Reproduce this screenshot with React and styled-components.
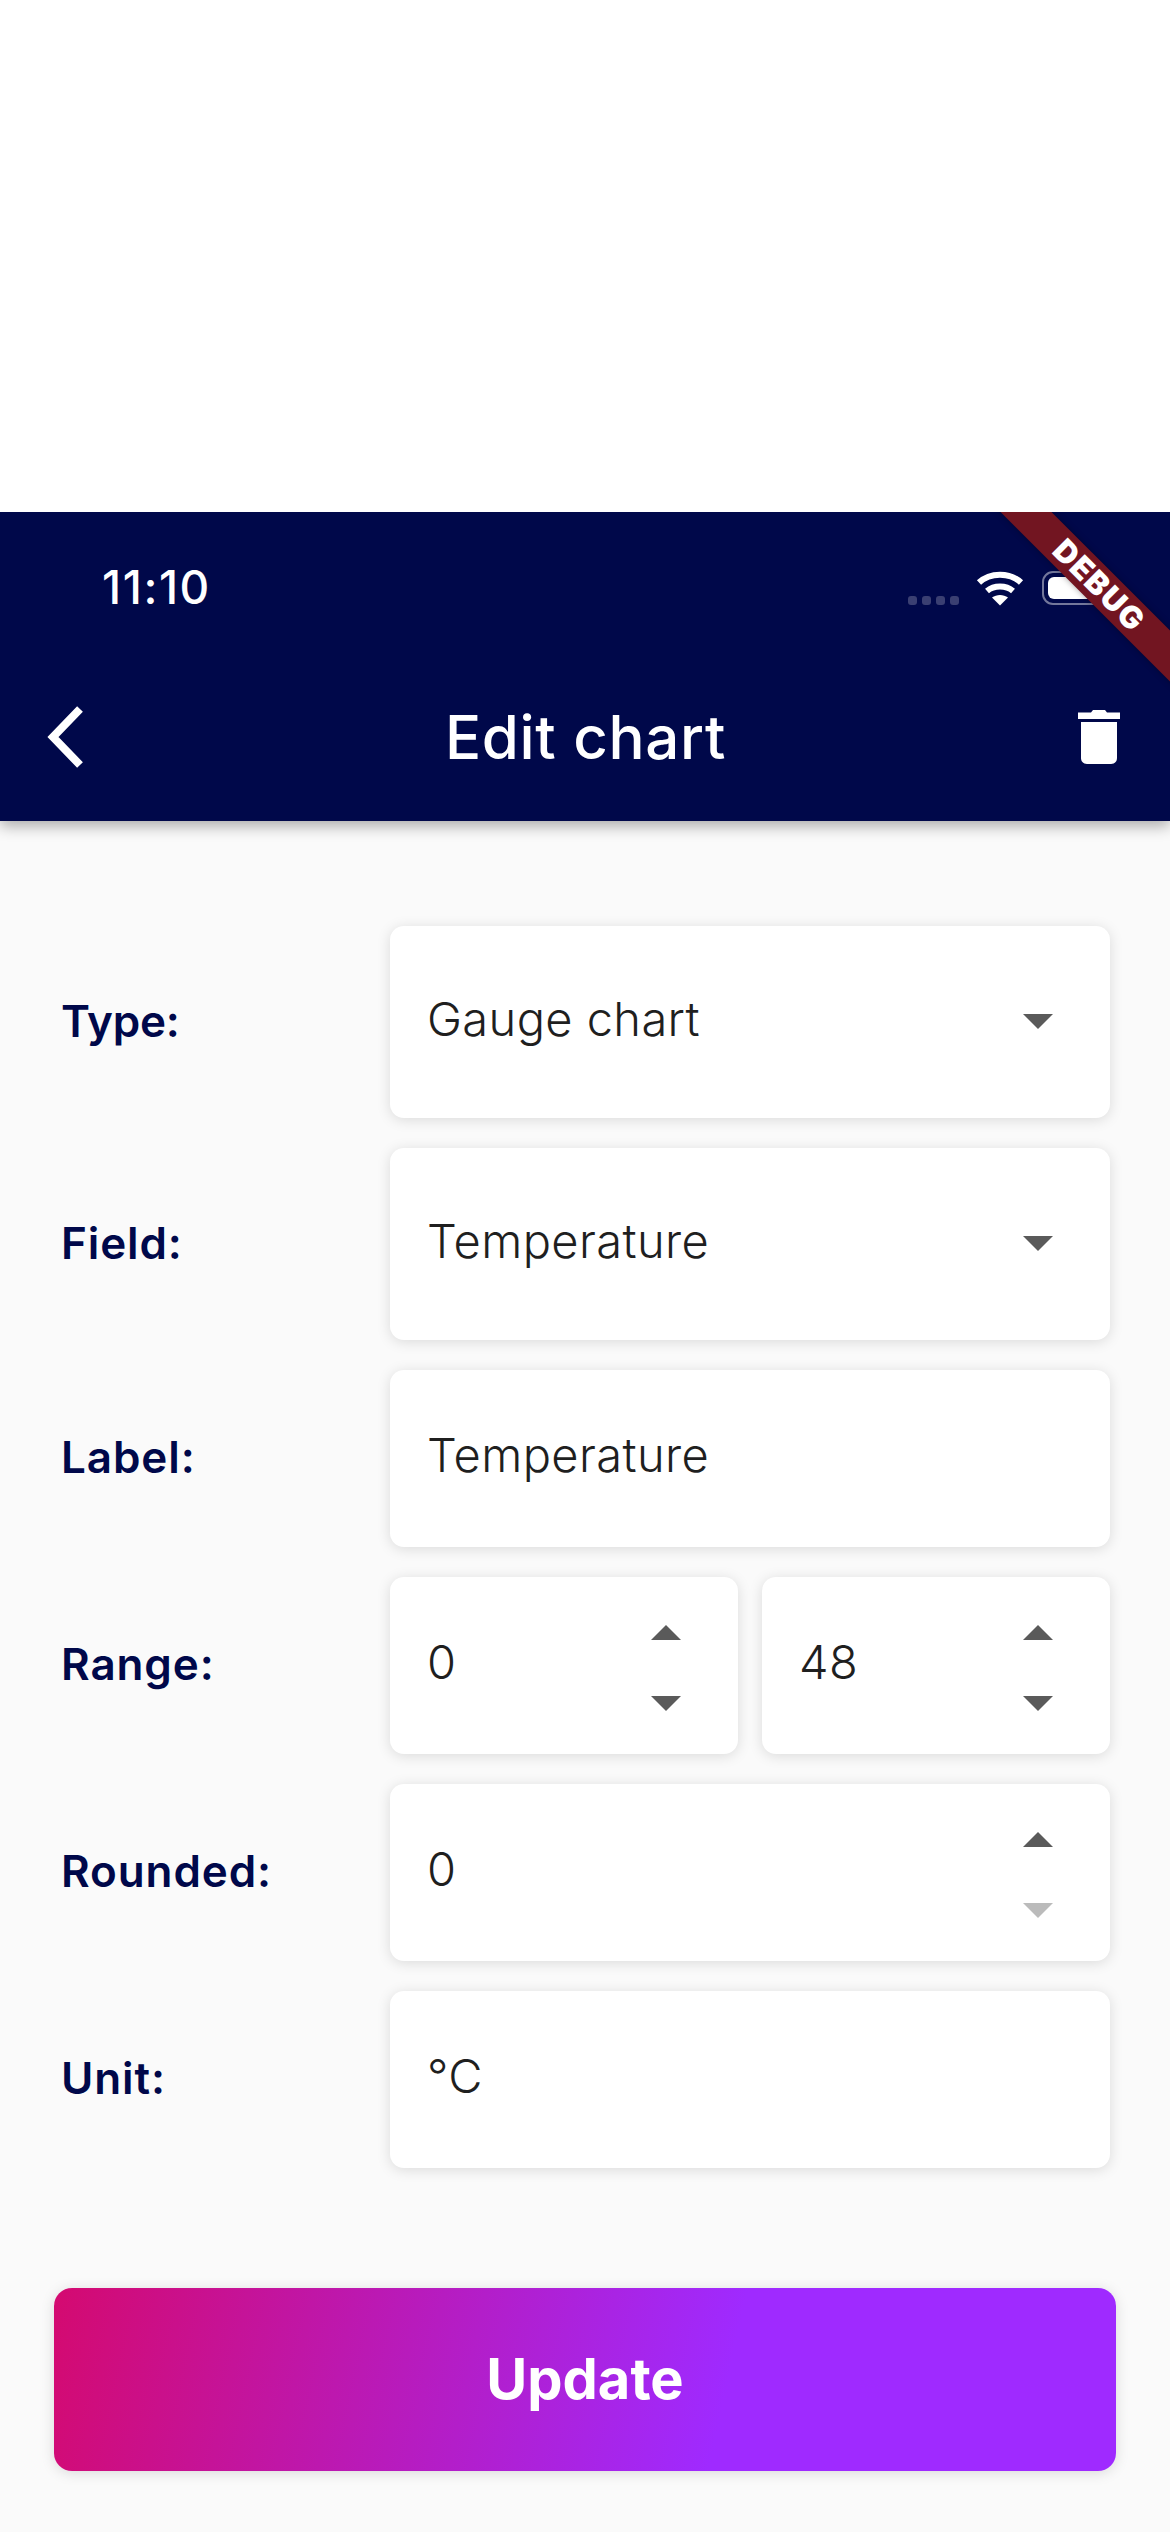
import React from 'react'
import styled, { createGlobalStyle } from 'styled-components'

const GlobalStyle = createGlobalStyle`
  html, body {
    margin: 0;
    padding: 0;
    background: #ffffff;
  }
  * {
    box-sizing: border-box;
  }
`

const Page = styled.div`
  width: 1170px;
  height: 2532px;
  display: flex;
  flex-direction: column;
  overflow: hidden;
  font-family: Inter, "Noto Sans", sans-serif;
`

const TopGap = styled.div`
  height: 512px;
  flex: none;
  background: #ffffff;
`

const Screen = styled.div`
  position: relative;
  flex: 1;
  display: flex;
  flex-direction: column;
  background: #fafafa;
  overflow: hidden;
`

const Header = styled.header`
  position: relative;
  flex: none;
  background: #00084a;
  box-shadow: 0 5px 14px rgba(0, 0, 0, 0.32);
  color: #ffffff;
`

const StatusBar = styled.div`
  height: 141px;
  display: flex;
  align-items: center;
  justify-content: space-between;
  padding: 8px 63px 0 102px;
`

const Time = styled.span`
  font-size: 46px;
  font-weight: 500;
  letter-spacing: 1.6px;
`

const StatusIcons = styled.div`
  display: flex;
  align-items: flex-end;
  height: 36px;
`

const SignalDots = styled.div`
  display: flex;
  gap: 5px;
  margin-right: 17px;
`

const SignalDot = styled.span`
  width: 9px;
  height: 9px;
  border-radius: 3px;
  background: #3a3f72;
`

const Battery = styled.div`
  width: 65px;
  height: 34px;
  margin-left: 18px;
  padding: 4px;
  border: 2px solid rgba(255, 255, 255, 0.45);
  border-radius: 11px;
`

const BatteryFill = styled.div`
  height: 100%;
  background: #ffffff;
  border-radius: 6px;
`

const NavBar = styled.div`
  height: 168px;
  display: flex;
  align-items: center;
  justify-content: space-between;
  padding: 0 50px 0 45px;
`

const Title = styled.h1`
  margin: 0;
  font-size: 60px;
  font-weight: 500;
  letter-spacing: 0.7px;
`

const Banner = styled.div`
  position: absolute;
  top: 0;
  right: 0;
  width: 200px;
  height: 200px;
  overflow: hidden;
  pointer-events: none;
`

const Ribbon = styled.div`
  position: absolute;
  left: -72px;
  top: 54px;
  width: 400px;
  height: 36px;
  transform: rotate(45deg);
  background: #721521;
  box-shadow: 0 0 6px rgba(0, 0, 0, 0.35);
  color: #ffffff;
  font-size: 31px;
  font-weight: 900;
  letter-spacing: 1.5px;
  line-height: 36px;
  text-align: center;
  text-indent: 4px;
`

const Form = styled.main`
  display: flex;
  flex-direction: column;
  gap: 30px;
  padding: 105px 60px 0 61px;
`

const Row = styled.div`
  display: flex;
  align-items: center;
`

const Label = styled.label`
  flex: none;
  width: 329px;
  padding-bottom: 3px;
  font-size: 44px;
  font-weight: 600;
  letter-spacing: ${props => (props.tight ? '-0.2px' : '0.9px')};
  color: #00084a;
`

const Fields = styled.div`
  flex: 1;
  display: flex;
  gap: 24px;
`

const Field = styled.div`
  flex: 1;
  height: ${props => (props.tall ? 192 : 177)}px;
  display: flex;
  align-items: center;
  justify-content: space-between;
  padding: 0 57px 8px 37px;
  background: #ffffff;
  border-radius: 14px;
  box-shadow: 0 2px 14px rgba(0, 0, 0, 0.13);
`

const Value = styled.span`
  font-size: 47px;
  font-weight: 350;
  letter-spacing: 0.4px;
  color: #1f1f1f;
`

const Triangle = styled.span`
  display: block;
  width: 0;
  height: 0;
  border-left: 15px solid transparent;
  border-right: 15px solid transparent;
  border-top: ${props => (props.up ? 'none' : `15px solid ${props.disabled ? '#bbbbbb' : '#5a5a5a'}`)};
  border-bottom: ${props => (props.up ? `15px solid ${props.disabled ? '#bbbbbb' : '#5a5a5a'}` : 'none')};
`

const Caret = styled(Triangle)`
  margin-top: 6px;
`

const Stepper = styled.div`
  display: flex;
  flex-direction: column;
  gap: 56px;
  margin-top: 13px;
`

const UpdateButton = styled.button`
  display: block;
  width: 1062px;
  height: 183px;
  margin: 120px 0 0 54px;
  padding: 0 0 2px;
  border: none;
  border-radius: 18px;
  background: linear-gradient(102deg, #d40a70 0%, #9f2aff 63%);
  box-shadow: 0 2px 14px rgba(0, 0, 0, 0.13);
  color: #ffffff;
  font-family: inherit;
  font-size: 56px;
  font-weight: 700;
`

const WifiIcon = () => (
  <svg width="48" height="36" viewBox="0 0 48 36" fill="none" style={{ marginBottom: '-1px' }}>
    <path d="M3 12.5C14 2 34 2 45 12.5" stroke="#fff" strokeWidth="6" />
    <path d="M11 21C18 15 30 15 37 21" stroke="#fff" strokeWidth="6" />
    <path d="M16 27.5C20.5 24 27.5 24 32 27.5L24 35.5Z" fill="#fff" />
  </svg>
)

const BackIcon = () => (
  <svg width="48" height="72" viewBox="0 0 48 72" fill="none">
    <path d="M35 8L8 36L35 64" stroke="#fff" strokeWidth="8" />
  </svg>
)

const TrashIcon = () => (
  <svg width="42" height="54" viewBox="0 0 42 54">
    <path d="M0 2.5H13L15 0H27L29 2.5H42V9H0Z" fill="#fff" />
    <path d="M3 12H39V48C39 51.5 36.5 54 33 54H9C5.5 54 3 51.5 3 48Z" fill="#fff" />
  </svg>
)

const Spinner = ({ downDisabled }) => (
  <Stepper>
    <Triangle up />
    <Triangle disabled={downDisabled} />
  </Stepper>
)

export default function App() {
  return (
    <Page>
      <GlobalStyle />
      <TopGap />
      <Screen>
        <Header>
          <StatusBar>
            <Time>11:10</Time>
            <StatusIcons>
              <SignalDots>
                <SignalDot />
                <SignalDot />
                <SignalDot />
                <SignalDot />
              </SignalDots>
              <WifiIcon />
              <Battery>
                <BatteryFill />
              </Battery>
            </StatusIcons>
          </StatusBar>
          <NavBar>
            <BackIcon />
            <Title>Edit chart</Title>
            <TrashIcon />
          </NavBar>
        </Header>
        <Form>
          <Row>
            <Label tight>Type:</Label>
            <Fields>
              <Field tall>
                <Value>Gauge chart</Value>
                <Caret />
              </Field>
            </Fields>
          </Row>
          <Row>
            <Label>Field:</Label>
            <Fields>
              <Field tall>
                <Value>Temperature</Value>
                <Caret />
              </Field>
            </Fields>
          </Row>
          <Row>
            <Label>Label:</Label>
            <Fields>
              <Field>
                <Value>Temperature</Value>
              </Field>
            </Fields>
          </Row>
          <Row>
            <Label>Range:</Label>
            <Fields>
              <Field>
                <Value>0</Value>
                <Spinner />
              </Field>
              <Field>
                <Value>48</Value>
                <Spinner />
              </Field>
            </Fields>
          </Row>
          <Row>
            <Label>Rounded:</Label>
            <Fields>
              <Field>
                <Value>0</Value>
                <Spinner downDisabled />
              </Field>
            </Fields>
          </Row>
          <Row>
            <Label>Unit:</Label>
            <Fields>
              <Field>
                <Value>°C</Value>
              </Field>
            </Fields>
          </Row>
        </Form>
        <UpdateButton>Update</UpdateButton>
        <Banner>
          <Ribbon>DEBUG</Ribbon>
        </Banner>
      </Screen>
    </Page>
  )
}
